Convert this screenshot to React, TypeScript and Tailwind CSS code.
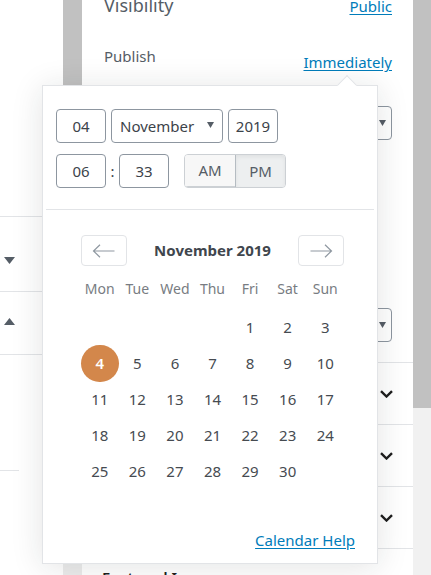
// Publish date picker popover over the post sidebar

const FONT = { fontFamily: '"Noto Sans", "Open Sans", sans-serif' };

const DAY_NAMES = ['Mon', 'Tue', 'Wed', 'Thu', 'Fri', 'Sat', 'Sun'];

// November 2019 starts on a Friday
const CELLS: (number | null)[] = [
  null, null, null, null,
  ...Array.from({ length: 30 }, (_, i) => i + 1),
];

function Caret({ up = false }: { up?: boolean }) {
  return (
    <svg width="11" height="7" viewBox="0 0 11 7" className="block">
      <polygon points={up ? '0,7 11,7 5.5,0' : '0,0 11,0 5.5,7'} fill="#555d66" />
    </svg>
  );
}

function Chevron() {
  return (
    <svg width="13" height="8" viewBox="0 0 13 8" className="block">
      <path d="M1 1.2l5.5 5.3 5.5-5.3" fill="none" stroke="#1e1e1e" strokeWidth="2.4" />
    </svg>
  );
}

function Arrow({ right = false }: { right?: boolean }) {
  return (
    <svg width="24" height="14" viewBox="0 0 24 14" className={right ? 'block rotate-180' : 'block'}>
      <path d="M1.5 7h21M8 0.8L1.5 7 8 13.2" fill="none" stroke="#8f98a1" strokeWidth="1.2" />
    </svg>
  );
}

function SelectCaret() {
  return (
    <svg width="7" height="6" viewBox="0 0 7 6" className="block">
      <polygon points="0,0 7,0 3.5,6" fill="#555d66" />
    </svg>
  );
}

function Field({ value, w }: { value: string; w: string }) {
  return (
    <div
      className={`${w} h-[34px] border border-[#8d96a0] rounded-[4px] flex items-center justify-center text-[15px] text-[#3c434a]`}
    >
      {value}
    </div>
  );
}

function Popover() {
  return (
    <div className="absolute left-[42px] top-[85px] w-[336px] h-[479px] bg-white border border-[#e2e4e7] shadow-[0_3px_30px_rgba(25,30,35,0.12)]">
      <div className="absolute left-[297px] top-[-8px] w-[14px] h-[14px] rotate-45 bg-white border-l border-t border-[#e2e4e7]" />

      <div className="relative">
        <div className="pt-[23px] pl-[13px] flex flex-col gap-[11px]">
          <div className="flex gap-[5px]">
            <Field value="04" w="w-[50px]" />
            <div className="w-[112px] h-[34px] border border-[#8d96a0] rounded-[4px] flex items-center justify-between pl-[8px] pr-[8px] text-[15px] text-[#3c434a]">
              <span>November</span>
              <span className="mb-[2px]">
                <SelectCaret />
              </span>
            </div>
            <Field value="2019" w="w-[50px]" />
          </div>
          <div className="flex items-center">
            <Field value="06" w="w-[50px]" />
            <span className="w-[13px] text-center text-[15px] text-[#3c434a]">:</span>
            <Field value="33" w="w-[50px]" />
            <div className="ml-[15px] flex h-[34px] rounded-[4px] border border-[#ccd0d4] overflow-hidden text-[15px] text-[#555d66]">
              <div className="w-[50px] flex items-center justify-center bg-[#f7f7f7] border-b border-[#ccd0d4]">AM</div>
              <div className="w-[50px] flex items-center justify-center bg-[#edeff0] border-l border-[#b5bcc2] shadow-[inset_0_2px_4px_rgba(0,0,0,0.06)]">
                PM
              </div>
            </div>
          </div>
        </div>

        <div className="mt-[21px] mx-[3px] h-px bg-[#e2e4e7]" />

        <div className="ml-[38px] w-[263px] mt-[25px]">
          <div className="flex items-center justify-between">
            <div className="w-[46px] h-[31px] border border-[#e2e4e7] rounded-[4px] flex items-center justify-center">
              <Arrow />
            </div>
            <span className="text-[15px] font-bold text-[#40464d]">November 2019</span>
            <div className="w-[46px] h-[31px] border border-[#e2e4e7] rounded-[4px] flex items-center justify-center">
              <Arrow right />
            </div>
          </div>

          <div className="mt-[13px] grid grid-cols-7 h-[20px] text-[14px] leading-[20px] text-[#787c82]">
            {DAY_NAMES.map((d) => (
              <span key={d} className="text-center">{d}</span>
            ))}
          </div>

          <div className="mt-[10px] grid grid-cols-7 auto-rows-[36px] text-[15px] text-[#464b51]">
            {CELLS.map((day, i) => (
              <div key={i} className="flex items-center justify-center">
                {day === 4 ? (
                  <span className="w-[38px] h-[37px] rounded-full bg-[#d3874b] text-white font-semibold flex items-center justify-center">
                    4
                  </span>
                ) : (
                  day
                )}
              </div>
            ))}
          </div>
        </div>

        <div className="mt-[41px] pr-[22px] flex justify-end">
          <span className="text-[15px] leading-[20px] text-[#007cba] underline underline-offset-2">Calendar Help</span>
        </div>
      </div>
    </div>
  );
}

export default function App() {
  return (
    <div className="relative w-[431px] h-[575px] overflow-hidden bg-white flex items-start" style={FONT}>
      {/* left panel */}
      <div className="w-[63px] shrink-0 bg-white">
        <div className="h-[216px]" />
        <div className="h-[75px] border-t border-[#e2e4e7] pl-[4px] pt-[40px]">
          <Caret />
        </div>
        <div className="h-[63px] border-t border-[#e2e4e7] pl-[4px] pt-[26px]">
          <Caret up />
        </div>
        <div className="h-[116px] border-t border-[#e2e4e7]" />
        <div className="w-[19px] h-px bg-[#e2e4e7]" />
      </div>

      {/* left scrollbar */}
      <div className="w-[19px] h-[575px] shrink-0 bg-[#ececec]">
        <div className="h-[300px] bg-[#c1c1c1]" />
      </div>

      {/* sidebar */}
      <div className="w-[331px] shrink-0 bg-white text-[15px]">
        <div className="mt-[-7px] pl-[22px] pr-[21px] flex justify-between items-baseline">
          <span className="text-[18px] leading-[24px] text-[#555d66]">Visibility</span>
          <span className="leading-[20px] text-[#007cba] underline underline-offset-2">Public</span>
        </div>
        <div className="mt-[29px] pl-[22px] pr-[21px] flex justify-between items-start">
          <span className="leading-[20px] text-[#555d66]">Publish</span>
          <span className="mt-[6px] leading-[20px] text-[#007cba] underline underline-offset-2">Immediately</span>
        </div>
        <div className="mt-[34px] mr-[21px] ml-[22px] h-[34px] border border-[#8d96a0] rounded-[4px] flex items-center justify-end pr-[5px]">
          <SelectCaret />
        </div>
        <div className="mt-[168px] mr-[21px] ml-[22px] h-[34px] border border-[#8d96a0] rounded-[4px] flex items-center justify-end pr-[5px]">
          <SelectCaret />
        </div>
        <div className="mt-[20px]">
          {[0, 1, 2].map((i) => (
            <div key={i} className="h-[62px] border-t border-[#e2e4e7] flex items-center justify-end pr-[20px]">
              <Chevron />
            </div>
          ))}
          <div className="border-t border-[#e2e4e7] pt-[17px] pl-[20px] text-[15px] font-semibold text-[#1e1e1e]">
            Featured Image
          </div>
        </div>
      </div>

      {/* right scrollbar */}
      <div className="w-[18px] h-[575px] shrink-0 bg-[#f1f1f1]">
        <div className="h-[408px] bg-[#c1c1c1]" />
      </div>

      <Popover />
    </div>
  );
}
